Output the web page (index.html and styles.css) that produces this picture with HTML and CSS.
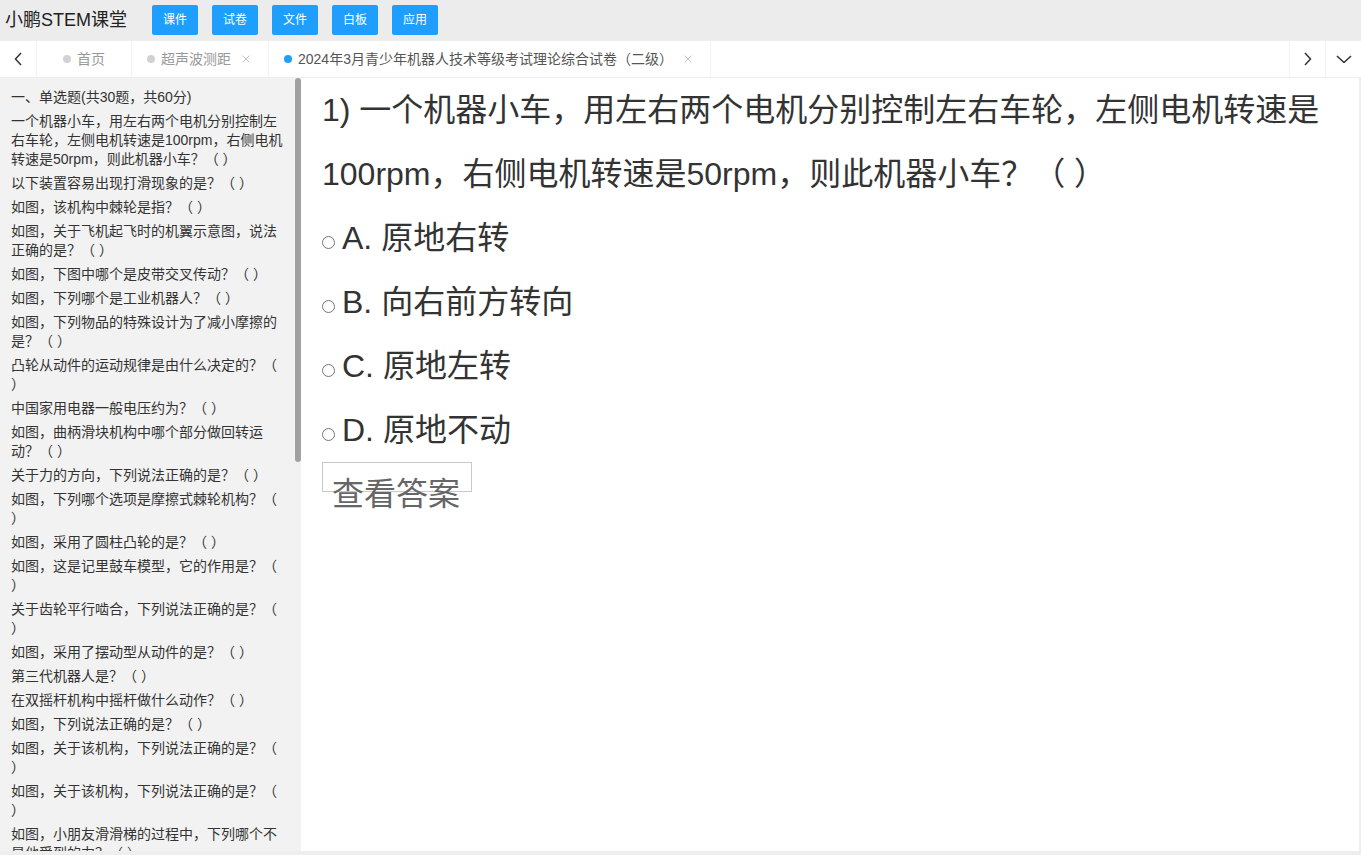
FILE: index.html
```html
<!DOCTYPE html>
<html lang="zh-CN">
<head>
<meta charset="UTF-8">
<meta name="viewport" content="width=device-width, initial-scale=1.0">
<title>小鹏STEM课堂</title>
<link rel="stylesheet" href="styles.css">
</head>
<body>

<div class="header">
    <div class="logo">小鹏STEM课堂</div>
    <div class="nav">
        <span class="nav-btn">课件</span>
        <span class="nav-btn">试卷</span>
        <span class="nav-btn">文件</span>
        <span class="nav-btn">白板</span>
        <span class="nav-btn">应用</span>
    </div>
</div>

<div class="tabbar">
    <div class="tab-arrow">
        <svg width="8" height="14" viewBox="0 0 8 14"><path d="M7 1 L1.5 7 L7 13" fill="none" stroke="#333" stroke-width="1.5"/></svg>
    </div>
    <div class="tab tab-home"><i class="dot"></i>首页</div>
    <div class="tab"><i class="dot"></i>超声波测距<span class="close"><svg width="8" height="8" viewBox="0 0 8 8"><path d="M0.5 0.5 L7.5 7.5 M7.5 0.5 L0.5 7.5" stroke="#c2c2c2" stroke-width="1"/></svg></span></div>
    <div class="tab tab-active"><i class="dot"></i>2024年3月青少年机器人技术等级考试理论综合试卷（二级）<span class="close"><svg width="8" height="8" viewBox="0 0 8 8"><path d="M0.5 0.5 L7.5 7.5 M7.5 0.5 L0.5 7.5" stroke="#c2c2c2" stroke-width="1"/></svg></span></div>
    <div class="tab-space"></div>
    <div class="tab-arrow tab-arrow-right">
        <svg width="8" height="14" viewBox="0 0 8 14"><path d="M1 1 L6.5 7 L1 13" fill="none" stroke="#333" stroke-width="1.5"/></svg>
    </div>
    <div class="tab-arrow tab-arrow-right">
        <svg width="16" height="8" viewBox="0 0 16 8"><path d="M1 1 L8 7.5 L15 1" fill="none" stroke="#333" stroke-width="1.5"/></svg>
    </div>
</div>

<div class="page">
    <div class="sidebar">
        <div class="list">
            <div class="item">一、单选题(共30题，共60分)</div>
            <div class="item">一个机器小车，用左右两个电机分别控制左右车轮，左侧电机转速是100rpm，右侧电机转速是50rpm，则此机器小车？（ ）</div>
            <div class="item">以下装置容易出现打滑现象的是？（ ）</div>
            <div class="item">如图，该机构中棘轮是指？（ ）</div>
            <div class="item">如图，关于飞机起飞时的机翼示意图，说法正确的是？（ ）</div>
            <div class="item">如图，下图中哪个是皮带交叉传动？（ ）</div>
            <div class="item">如图，下列哪个是工业机器人？（ ）</div>
            <div class="item">如图，下列物品的特殊设计为了减小摩擦的是？（ ）</div>
            <div class="item">凸轮从动件的运动规律是由什么决定的？（ ）</div>
            <div class="item">中国家用电器一般电压约为？（ ）</div>
            <div class="item">如图，曲柄滑块机构中哪个部分做回转运动？（ ）</div>
            <div class="item">关于力的方向，下列说法正确的是？（ ）</div>
            <div class="item">如图，下列哪个选项是摩擦式棘轮机构？（ ）</div>
            <div class="item">如图，采用了圆柱凸轮的是？（ ）</div>
            <div class="item">如图，这是记里鼓车模型，它的作用是？（ ）</div>
            <div class="item">关于齿轮平行啮合，下列说法正确的是？（ ）</div>
            <div class="item">如图，采用了摆动型从动件的是？（ ）</div>
            <div class="item">第三代机器人是？（ ）</div>
            <div class="item">在双摇杆机构中摇杆做什么动作？（ ）</div>
            <div class="item">如图，下列说法正确的是？（ ）</div>
            <div class="item">如图，关于该机构，下列说法正确的是？（ ）</div>
            <div class="item">如图，关于该机构，下列说法正确的是？（ ）</div>
            <div class="item">如图，小朋友滑滑梯的过程中，下列哪个不是他受到的力？（ ）</div>
        </div>
        <div class="scroll-thumb"></div>
    </div>

    <div class="main">
        <div class="question">1) 一个机器小车，用左右两个电机分别控制左右车轮，左侧电机转速是100rpm，右侧电机转速是50rpm，则此机器小车？（ ）</div>
        <label class="option"><input type="radio" name="q1">A. 原地右转</label>
        <label class="option"><input type="radio" name="q1">B. 向右前方转向</label>
        <label class="option"><input type="radio" name="q1">C. 原地左转</label>
        <label class="option"><input type="radio" name="q1">D. 原地不动</label>
        <div class="answer-btn">查看答案</div>
    </div>
</div>

</body>
</html>
```

FILE: styles.css
```css
body {
    margin: 0;
    padding: 0;
    background-color: #eeeeee;
    font-family: "Liberation Sans", "Noto Sans CJK SC", sans-serif;
    color: #333;
    overflow: hidden;
    height: 855px;
}

.header {
    height: 40px;
    display: flex;
    align-items: center;
    background-color: #ececec;
}

.logo {
    padding-left: 5px;
    font-size: 18px;
    color: #222;
    line-height: 24px;
}

.nav {
    display: flex;
    gap: 14px;
    margin-left: 25px;
}

.nav-btn {
    display: block;
    height: 30px;
    line-height: 30px;
    padding: 0 11px;
    background-color: #1e9fff;
    color: #fff;
    font-size: 12px;
    border-radius: 2px;
}

.tabbar {
    margin-top: 1px;
    height: 36px;
    display: flex;
    background-color: #fff;
    font-size: 14px;
    line-height: 36px;
}

.tab-arrow {
    width: 36px;
    border-right: 1px solid #f2f2f2;
    display: flex;
    align-items: center;
    justify-content: center;
}

.tab-arrow-right {
    width: 35px;
    border-right: none;
    border-left: 1px solid #f2f2f2;
}

.tab {
    display: flex;
    align-items: center;
    padding: 0 18px 0 15px;
    border-right: 1px solid #f2f2f2;
    color: #999;
    white-space: nowrap;
}

.tab-home {
    padding: 0 26px;
}

.tab-active {
    color: #555;
}

.dot {
    display: block;
    width: 8px;
    height: 8px;
    border-radius: 50%;
    background-color: #d2d2d2;
    margin-right: 6px;
}

.tab-active .dot {
    background-color: #1e9fff;
}

.close {
    display: flex;
    margin-left: 11px;
}

.tab-space {
    flex: 1;
}

.page {
    margin-top: 1px;
    display: flex;
    height: 773px;
}

.sidebar {
    position: relative;
    width: 301px;
    height: 100%;
    overflow: hidden;
    background-color: #f2f2f2;
}

.scroll-thumb {
    position: absolute;
    top: 0;
    right: 0;
    width: 6px;
    height: 384px;
    border-radius: 3px;
    background-color: #a1a1a1;
}

.list {
    padding: 8px 14px 0 11px;
    font-size: 14px;
    line-height: 19px;
}

.item {
    padding: 2px 0 3px;
}

.main {
    flex: 1;
    margin-right: 2px;
    background-color: #fff;
    padding: 0 21px;
    font-size: 32px;
    line-height: 64px;
    color: #333;
}

.option {
    display: block;
}

.option input {
    margin: 3px 7px 0 0;
}

.answer-btn {
    box-sizing: border-box;
    width: 150px;
    height: 30px;
    padding: 14px 9px 0;
    border: 1px solid #c9c9c9;
    font-size: 32px;
    line-height: 34px;
    color: #666;
    white-space: nowrap;
}
```
